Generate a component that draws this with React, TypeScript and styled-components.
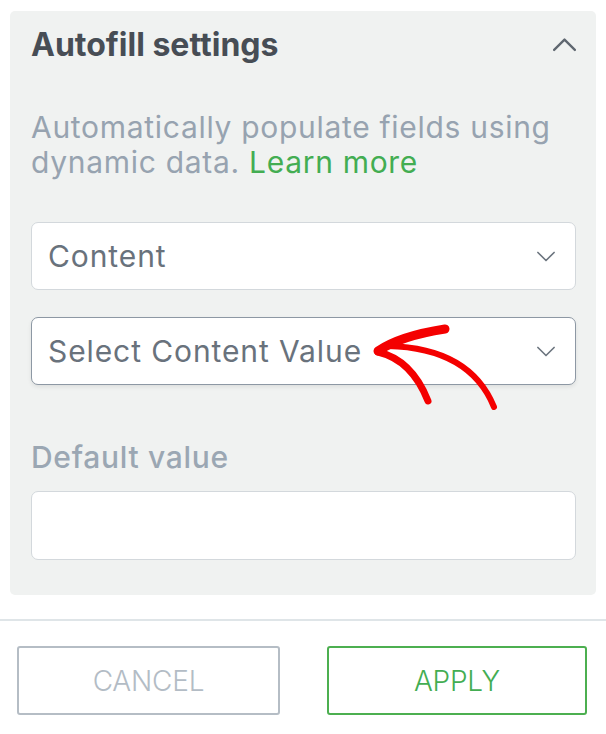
import React from 'react';
import styled, { createGlobalStyle } from 'styled-components';

const GlobalStyle = createGlobalStyle`
	html, body {
		margin: 0;
		padding: 0;
		background: #ffffff;
	}
	body {
		font-family: Inter, 'Noto Sans', 'Liberation Sans', sans-serif;
	}
`;

const Page = styled('div')`
	position: relative;
	width: 606px;
	height: 734px;
	overflow: hidden;
	background: #ffffff;
`;

const Panel = styled('section')`
	margin: 11px 10px 0;
	padding: 14px 20px 35px 21px;
	background: #f0f2f1;
	border-radius: 5px;
`;

const Header = styled('div')`
	display: flex;
	align-items: center;
	justify-content: space-between;
	height: 40px;
`;

const Title = styled('h2')`
	margin: 0;
	font-size: 32px;
	line-height: 40px;
	font-weight: 700;
	color: #474d55;
`;

const Description = styled('p')`
	margin: 45px 0 0;
	font-size: 30px;
	line-height: 35px;
	letter-spacing: 0.7px;
	color: #97a3b0;

	a {
		color: #43ad52;
		text-decoration: none;
	}
`;

const Fields = styled('div')`
	display: flex;
	flex-direction: column;
	gap: 27px;
	margin-top: 42px;
`;

const SelectBox = styled('div')<{ $active?: boolean }>`
	display: flex;
	align-items: center;
	justify-content: space-between;
	box-sizing: border-box;
	height: 68px;
	padding: 0 20px 0 16px;
	background: #ffffff;
	border: 1.5px solid ${({ $active }) => ($active ? '#8d98a4' : '#d3d8dc')};
	border-radius: 7px;
	box-shadow: ${({ $active }) => ($active ? '0 2px 4px rgba(0,0,0,0.08)' : 'none')};
	font-size: 30px;
	letter-spacing: 0.9px;
	color: #69727c;
`;

const Label = styled('div')`
	margin-top: 55px;
	font-size: 30px;
	line-height: 35px;
	letter-spacing: 0.7px;
	font-weight: 500;
	color: #9ba7b3;
`;

const TextInput = styled('div')`
	box-sizing: border-box;
	height: 69px;
	margin-top: 16px;
	background: #ffffff;
	border: 1.5px solid #d3d8dc;
	border-radius: 7px;
`;

const Divider = styled('hr')`
	margin: 24px 0 0;
	border: 0;
	height: 2px;
	background: #dfe5e8;
`;

const Footer = styled('div')`
	display: grid;
	grid-template-columns: 263px 260px;
	gap: 47px;
	padding: 25px 0 0 17px;
`;

const Button = styled('button')<{ $primary?: boolean }>`
	box-sizing: border-box;
	height: 69px;
	background: #ffffff;
	border: 2px solid ${({ $primary }) => ($primary ? '#4caf50' : '#b5bdc5')};
	border-radius: 3px;
	color: ${({ $primary }) => ($primary ? '#43ad52' : '#b3bcc5')};
	font-family: inherit;
	font-size: 28px;
	font-weight: 300;
	letter-spacing: -0.2px;
	cursor: pointer;
`;

const Chevron = ({ up = false, size = 18 }: { up?: boolean; size?: number }) => (
	<svg width={size} height={size / 2 + 2} viewBox="0 0 20 11" fill="none">
		<polyline
			points={up ? '1,10 10,1 19,10' : '1,1 10,10 19,1'}
			stroke={up ? '#5f6770' : '#6b747e'}
			strokeWidth={up ? 2 : 1.8}
			strokeLinecap="round"
			strokeLinejoin="round"
		/>
	</svg>
);

const Annotation = styled('svg')`
	position: absolute;
	top: 0;
	left: 0;
	pointer-events: none;
`;

const Arrow = () => (
	<Annotation width="606" height="734" viewBox="0 0 606 734">
		<g stroke="#f40000" fill="none" strokeLinecap="round" strokeLinejoin="round">
			<path d="M378 351 Q400 336 445 329" strokeWidth="9" />
			<path d="M378 352 Q412 360 428 401" strokeWidth="7" />
			<path d="M388 346 Q470 348 494 407" strokeWidth="6" />
		</g>
	</Annotation>
);

export default function App() {
	return (
		<Page>
			<GlobalStyle />
			<Panel>
				<Header>
					<Title>Autofill settings</Title>
					<Chevron up size={23} />
				</Header>
				<Description>
					Automatically populate fields using dynamic data. <a href="#">Learn more</a>
				</Description>
				<Fields>
					<SelectBox>
						<span>Content</span>
						<Chevron />
					</SelectBox>
					<SelectBox $active>
						<span>Select Content Value</span>
						<Chevron />
					</SelectBox>
				</Fields>
				<Label>Default value</Label>
				<TextInput />
			</Panel>
			<Divider />
			<Footer>
				<Button>CANCEL</Button>
				<Button $primary>APPLY</Button>
			</Footer>
			<Arrow />
		</Page>
	);
}
